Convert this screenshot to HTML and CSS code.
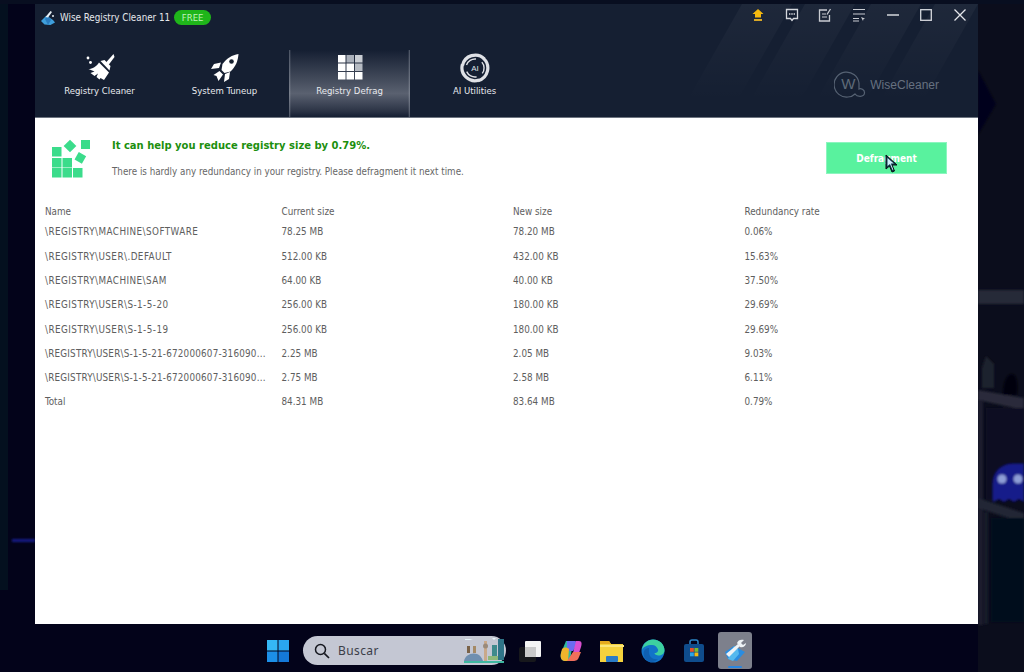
FILE: index.html
```html
<!DOCTYPE html>
<html lang="en">
<head>
<meta charset="utf-8">
<title>Wise Registry Cleaner 11</title>
<link rel="stylesheet" href="styles.css">
</head>
<body>
<div class="desktop">
  <svg class="wallpaper" width="1024" height="672" viewBox="0 0 1024 672" aria-hidden="true">
    <defs>
      <filter id="soft"><feGaussianBlur stdDeviation="1"/></filter>
    </defs>
    <rect width="1024" height="672" fill="#03031a"/>
    <rect x="0" y="0" width="8" height="590" fill="#04101f"/>
    <rect x="978" y="0" width="46" height="672" fill="#0b0d1c"/>
    <g filter="url(#soft)">
      <polygon points="978,70 996,104 978,135" fill="#04061a"/>
      <rect x="978" y="290" width="46" height="14" fill="#262a38"/>
      <polygon points="978,390 1024,398 1024,410 978,400" fill="#292c3a"/>
      <rect x="986" y="408" width="38" height="92" fill="#090b22"/>
      <rect x="978" y="400" width="5" height="225" fill="#1a1e2e"/>
      <polygon points="978,498 1024,513 1024,523 978,508" fill="#242734"/>
      <rect x="984" y="512" width="4" height="112" fill="#191c2c"/>
      <rect x="991" y="518" width="33" height="104" fill="#05071a"/>
      <path d="M993 502v-18c0-12 8-20 20-20h11v38l-5-3-5 3-5-3-5 3-5-3z" fill="#191b8a"/>
      <circle cx="1002" cy="479" r="4.500" fill="#8e9ed6"/>
      <circle cx="1018" cy="479" r="4.500" fill="#8e9ed6"/>
      <path d="M1003 395c0-14 4-21 9-21s6 10 5 21z" fill="#03040c"/>
      <path d="M982 388v-20l4-12 8 8v24z" fill="#1e222e"/>
      <rect x="12" y="539" width="23" height="3" fill="#131a86"/>
    </g>
    <rect x="0" y="0" width="1024" height="4" fill="#080e20"/>
  </svg>

  <main class="window">
    <header class="head">
      <svg class="stripes" width="943" height="113" viewBox="0 0 943 113" aria-hidden="true">
        <defs>
          <linearGradient id="fade" x1="0" y1="0" x2="0" y2="1">
            <stop offset="0" stop-color="#fff" stop-opacity=".04"/>
            <stop offset="1" stop-color="#fff" stop-opacity="0"/>
          </linearGradient>
        </defs>
        <polygon points="707,0 757,0 702,97 652,97" fill="url(#fade)"/>
        <polygon points="770,0 820,0 765,97 715,97" fill="url(#fade)"/>
        <polygon points="836,0 886,0 831,97 781,97" fill="url(#fade)"/>
        <polygon points="900,0 943,0 888,97 845,97" fill="url(#fade)"/>
      </svg>
      <div class="titlebar">
        <div class="brand">
          <svg class="app-icon" width="16" height="16" viewBox="0 0 16 16" aria-hidden="true">
            <path d="M1 11l5-5 2.500 1L13 10l2 2.500-4.500 2.500-6-.5z" fill="#3f9fdc"/>
            <path d="M5 9l3-3 3 4-3 5z" fill="#2a7cc0"/>
            <path d="M5.500 7l5-6 1.500 1-4 5.500z" fill="#e8f0f6"/>
            <circle cx="13" cy="6" r="1" fill="#e8f0f6"/>
          </svg>
          <span class="app-name">Wise Registry Cleaner 11</span>
          <span class="free">FREE</span>
        </div>
        <div class="tools">
          <svg class="tool" width="14" height="14" viewBox="0 0 14 14" aria-hidden="true"><path d="M7 1l5.500 5H10v3.500H4V6H1.500z" fill="#f5b90f"/><rect x="3" y="11" width="8" height="2" fill="#d9a826"/></svg>
          <svg class="tool" width="14" height="14" viewBox="0 0 14 14" aria-hidden="true"><path d="M1.500 1.500h11v9H8.500L7 12.500 5.500 10.500h-4z" fill="none" stroke="#d5d8dd" stroke-width="1.300"/><path d="M4 6h1.400M6.300 6h1.400M8.600 6H10" stroke="#d5d8dd" stroke-width="1.600"/></svg>
          <svg class="tool" width="14" height="14" viewBox="0 0 14 14" aria-hidden="true"><path d="M9 2H1.500v11h10V7" fill="none" stroke="#c9ccd2" stroke-width="1.300"/><path d="M4 6h4M4 9h5" stroke="#c9ccd2" stroke-width="1.200"/><path d="M9 6.500L12.500 1" stroke="#c9ccd2" stroke-width="1.300"/></svg>
          <svg class="tool" width="14" height="14" viewBox="0 0 14 14" aria-hidden="true"><path d="M1 1.500h12M1 6h12M1 10.500h6M1 13h6" stroke="#c9ccd2" stroke-width="1.200"/><path d="M9 9l4 1.500-1.600.7L11 13z" fill="#c9ccd2"/></svg>
          <svg class="tool" width="14" height="14" viewBox="0 0 14 14" aria-hidden="true"><path d="M1 7h12" stroke="#d5d8dd" stroke-width="1.500"/></svg>
          <svg class="tool" width="14" height="14" viewBox="0 0 14 14" aria-hidden="true"><rect x="1.700" y="1.700" width="10.600" height="10.600" fill="none" stroke="#d5d8dd" stroke-width="1.300"/></svg>
          <svg class="tool" width="14" height="14" viewBox="0 0 14 14" aria-hidden="true"><path d="M1.500 1.500l11 11M12.500 1.500l-11 11" stroke="#e4e6ea" stroke-width="1.300"/></svg>
        </div>
      </div>
      <div class="navrow">
        <nav class="tabs">
          <div class="tab">
            <svg class="tab-icon" width="30" height="30" viewBox="0 0 30 30" aria-hidden="true">
              <circle cx="3" cy="5" r="1.400" fill="#fff"/><circle cx="5.500" cy="9.500" r="1.400" fill="#fff"/>
              <path d="M28.500 1l-7.500 8.500 2.500 2.500L29.500 4z" fill="#fff"/>
              <path d="M15.500 8l4-1 6 6-1 4.500z" fill="#fff"/>
              <path d="M14 9.500l10 10-5 7.500-3.500-2-1 1.500-3-2.500 1.500-3.500-3.500 2.500-4-3 4-1.500-6-2.500c4 0 8-2.500 10.500-6.500z" fill="#fff"/>
            </svg>
            <span>Registry Cleaner</span>
          </div>
          <div class="tab">
            <svg class="tab-icon" width="30" height="30" viewBox="0 0 30 30" aria-hidden="true">
              <path d="M28.500 1C22 2 17 5 12.500 11l-1 6 3 3 6-1.500C25.500 14 28 8 28.500 1z" fill="#fff"/>
              <circle cx="21.500" cy="8.500" r="2.300" fill="#16202f"/>
              <path d="M11 9.500L4 11l-3 5 8-1zM20 19l-1 7-5 3 1-8z" fill="#fff"/>
              <path d="M9.500 18l3.500 3.500-4.500 6.500-2-5-3-1z" fill="#fff"/>
            </svg>
            <span>System Tuneup</span>
          </div>
          <div class="tab tab-active">
            <svg class="tab-icon" width="30" height="30" viewBox="0 0 30 30" aria-hidden="true">
              <rect x="3" y="2" width="7.500" height="7.500" fill="#fff"/><rect x="11.500" y="2" width="7.500" height="7.500" fill="#aab0ba"/><rect x="20" y="2" width="7.500" height="7.500" fill="#c9cdd3"/>
              <rect x="3" y="10.500" width="7.500" height="7.500" fill="#fff"/><rect x="11.500" y="10.500" width="7.500" height="7.500" fill="#fff"/><rect x="20" y="10.500" width="7.500" height="7.500" fill="#b6bbc3"/>
              <rect x="3" y="19" width="7.500" height="7.500" fill="#fff"/><rect x="11.500" y="19" width="7.500" height="7.500" fill="#fff"/><rect x="20" y="19" width="7.500" height="7.500" fill="#fff"/>
            </svg>
            <span>Registry Defrag</span>
          </div>
          <div class="tab">
            <svg class="tab-icon tab-icon-ai" width="30" height="30" viewBox="0 0 30 30" aria-hidden="true">
              <g class="swirl">
                <path d="M2.500 12.500A13 13 0 0 1 24.500 6"/>
                <path d="M2.500 12.500A13 13 0 0 1 24.500 6" transform="rotate(120 15 15)"/>
                <path d="M2.500 12.500A13 13 0 0 1 24.500 6" transform="rotate(240 15 15)"/>
                <path d="M6.500 12A9 9 0 0 1 16 6"/>
                <path d="M6.500 12A9 9 0 0 1 16 6" transform="rotate(120 15 15)"/>
                <path d="M6.500 12A9 9 0 0 1 16 6" transform="rotate(240 15 15)"/>
              </g>
              <text class="ai-mark" x="15" y="18" text-anchor="middle">AI</text>
            </svg>
            <span>AI Utilities</span>
          </div>
        </nav>
        <div class="wise-logo">
          <div class="wise-mark">
            <svg width="34" height="28" viewBox="0 0 34 28" aria-hidden="true">
              <path d="M25 12A12.500 12.500 0 1 0 14 26c2.500 0 5-1 7-3 2 3 9 3.500 9.500-1 .3-3.500-4-5-5.500-4z" fill="none" stroke="#566273" stroke-width="1.200"/>
            </svg>
            <span class="wise-w">W</span>
          </div>
          <span class="wise-name">WiseCleaner</span>
        </div>
      </div>
    </header>

    <section class="content">
      <div class="summary">
        <svg class="summary-icon" width="40" height="44" viewBox="0 0 40 44" aria-hidden="true">
          <g fill="#3bdc8b">
            <rect x="1" y="9" width="9.500" height="9.500"/>
            <rect x="1" y="20" width="9.500" height="9.500"/><rect x="11.500" y="20" width="9.500" height="9.500"/>
            <rect x="1" y="30" width="9.500" height="9.500"/><rect x="11.500" y="30" width="9.500" height="9.500"/><rect x="22" y="30" width="9.500" height="9.500"/>
            <rect x="30" y="2" width="9" height="9"/>
            <rect x="14.500" y="3.500" width="9" height="9" transform="rotate(45 19 8)"/>
            <rect x="25" y="15.500" width="8.500" height="8.500" transform="rotate(30 29 20)"/>
          </g>
        </svg>
        <div class="summary-text">
          <h1>It can help you reduce registry size by 0.79%.</h1>
          <p>There is hardly any redundancy in your registry. Please defragment it next time.</p>
        </div>
        <div class="action">
          <button class="defrag" type="button">Defragment</button>
          <svg class="cursor" width="14" height="20" viewBox="0 0 14 20" aria-hidden="true">
            <path d="M1 1v14l3.500-3 2.500 6 2.500-1-2.500-6h5z" fill="#0a3a4a" stroke="#0a0f14" stroke-width="1"/>
            <path d="M2.500 4v8l2.500-2 2.500 6 .8-.4-2.500-6h3z" fill="#cfeefa"/>
          </svg>
        </div>
      </div>

      <div class="report">
        <div class="row row-head"><span>Name</span><span>Current size</span><span>New size</span><span>Redundancy rate</span></div>
        <div class="row"><span class="path">\REGISTRY\MACHINE\SOFTWARE</span><span>78.25 MB</span><span>78.20 MB</span><span>0.06%</span></div>
        <div class="row"><span class="path">\REGISTRY\USER\.DEFAULT</span><span>512.00 KB</span><span>432.00 KB</span><span>15.63%</span></div>
        <div class="row"><span class="path">\REGISTRY\MACHINE\SAM</span><span>64.00 KB</span><span>40.00 KB</span><span>37.50%</span></div>
        <div class="row"><span class="path">\REGISTRY\USER\S-1-5-20</span><span>256.00 KB</span><span>180.00 KB</span><span>29.69%</span></div>
        <div class="row"><span class="path">\REGISTRY\USER\S-1-5-19</span><span>256.00 KB</span><span>180.00 KB</span><span>29.69%</span></div>
        <div class="row"><span class="path-long">\REGISTRY\USER\S-1-5-21-672000607-316090...</span><span>2.25 MB</span><span>2.05 MB</span><span>9.03%</span></div>
        <div class="row"><span class="path-long">\REGISTRY\USER\S-1-5-21-672000607-316090...</span><span>2.75 MB</span><span>2.58 MB</span><span>6.11%</span></div>
        <div class="row"><span>Total</span><span>84.31 MB</span><span>83.64 MB</span><span>0.79%</span></div>
      </div>
    </section>
  </main>

  <footer class="taskbar">
    <svg class="task-icon" width="24" height="24" viewBox="0 0 24 24" aria-hidden="true">
      <rect x="1" y="1" width="10.500" height="10.500" fill="#35b8f5"/><rect x="12.500" y="1" width="10.500" height="10.500" fill="#2aa6f0"/>
      <rect x="1" y="12.500" width="10.500" height="10.500" fill="#1c8fe8"/><rect x="12.500" y="12.500" width="10.500" height="10.500" fill="#1478d8"/>
    </svg>
    <div class="search">
      <svg width="18" height="18" viewBox="0 0 18 18" aria-hidden="true"><circle cx="7.500" cy="7.500" r="5" fill="none" stroke="#15171f" stroke-width="1.500"/><path d="M11.300 11.300L16 16" stroke="#15171f" stroke-width="1.700"/></svg>
      <span class="search-label">Buscar</span>
      <svg class="search-art" width="44" height="28" viewBox="0 0 44 28" aria-hidden="true">
        <path d="M3 2h5l3 1h-8zM30 1h4l-2 2z" fill="#e8f4fa"/>
        <path d="M2 24c1-6 8-9 13-7 3 1 5 4 6 7z" fill="#6f8fb0"/>
        <rect x="5" y="9" width="3" height="7" fill="#7a6248"/><rect x="11" y="9" width="3" height="7" fill="#a58a66"/>
        <rect x="22" y="4" width="3" height="20" fill="#c9a98a"/><circle cx="23.500" cy="9" r="2.500" fill="#9a8a7a"/>
        <rect x="30" y="8" width="5" height="14" fill="#3f8a8c"/><rect x="36" y="2" width="6" height="21" fill="#2f7488"/>
        <rect x="26" y="19" width="10" height="4" fill="#8fb87a"/>
        <path d="M2 24h40v2H2z" fill="#3fb7a0"/>
      </svg>
    </div>
    <div class="task-apps">
      <span class="app"><svg width="24" height="24" viewBox="0 0 24 24" aria-hidden="true"><rect x="1" y="8" width="17" height="15" rx="2" fill="#17181c"/><rect x="7" y="2" width="16" height="16" rx="1" fill="#f4f4f4"/><rect x="7" y="8" width="11" height="10" fill="#c9c9c9"/></svg></span>
      <span class="app"><svg width="24" height="24" viewBox="0 0 24 24" aria-hidden="true"><path d="M7 2h7l-3 20H6C2 22 1 18 2 14z" fill="#2fb8a0"/><path d="M8 2h7c3 0 3 2 2 5l-3 5H8z" fill="#6a6cf0"/><path d="M3 10c2-2 5-2 7 0l-1 12H6C2 22 1 18 2 14z" fill="#f0b42c"/><path d="M17 2h3c3 0 3 3 2 6l-3 9c-1 3-3 5-6 5h-4l5-8z" fill="#d84fd0"/><path d="M14 13h8l-2 5c-1 3-3 4-6 4H8z" fill="#f0705a"/></svg></span>
      <span class="app"><svg width="24" height="24" viewBox="0 0 24 24" aria-hidden="true"><path d="M0 2h9l2 3h12v18H0z" fill="#f5d23d"/><path d="M0 2h9l2 3H0z" fill="#e5ab1f"/><rect x="0" y="6" width="24" height="2" fill="#fbe67a"/><rect x="6" y="17" width="12" height="6" rx="1" fill="#2a7cc8"/></svg></span>
      <span class="app"><svg width="24" height="24" viewBox="0 0 24 24" aria-hidden="true"><circle cx="12" cy="12" r="11.500" fill="#1273c9"/><path d="M1 11C2 4 7 .5 12 .5c7 0 11.500 5 11.500 11 0 3-3 5-6 5-2 0-4-1-4-2.500 3 0 4-2 3.500-3.500C16 8 14 6 11 6 6 6 2 8 1 11z" fill="#3dd0a0"/><path d="M8 13c0 5 4 8 9 7-2 3-7 4-10 2-4-2-5-7-4-10 1-2 3-3 5-3z" fill="#0f5fb0"/></svg></span>
      <span class="app"><svg width="22" height="24" viewBox="0 0 22 24" aria-hidden="true"><path d="M7 6V3c0-1 1-2 2-2h4c1 0 2 1 2 2v3" fill="none" stroke="#2c86c8" stroke-width="1.500"/><rect x="1" y="5" width="20" height="18" rx="2" fill="#0f4c8c"/><rect x="7" y="9" width="3.800" height="3.800" fill="#e8502a"/><rect x="11.500" y="9" width="3.800" height="3.800" fill="#7cb82f"/><rect x="7" y="13.500" width="3.800" height="3.800" fill="#2ca5e8"/><rect x="11.500" y="13.500" width="3.800" height="3.800" fill="#f5b90f"/></svg></span>
      <span class="app app-active"><svg width="26" height="26" viewBox="0 0 26 26" aria-hidden="true"><path d="M3 14l9-6 11 6-8 9-9-2z" fill="#2a8ce0"/><path d="M12 8l4 3 1 5-6 7-5-2z" fill="#55b8ee"/><path d="M4 16L16 6l2 2L7 19z" fill="#eef2f6"/><path d="M15 5c1-3 4-4 7-3l-3 3 2 2 3-2c0 3-3 5-6 4z" fill="#eef2f6"/></svg><i class="app-bar"></i></span>
    </div>
  </footer>
</div>
</body>
</html>
```

FILE: styles.css
```css
* { box-sizing: border-box; }

html, body {
  margin: 0;
  padding: 0;
}

body {
  width: 1024px;
  height: 672px;
  overflow: hidden;
  background: #03031a;
  font-family: "DejaVu Sans Condensed", "DejaVu Sans", sans-serif;
}

.desktop {
  position: relative;
  width: 1024px;
  height: 672px;
  display: flex;
  flex-direction: column;
  padding-top: 4px;
}

.wallpaper {
  position: absolute;
  left: 0;
  top: 0;
}

.window {
  position: relative;
  width: 943px;
  height: 620px;
  margin-left: 35px;
  display: flex;
  flex-direction: column;
  background: #fff;
}

.head {
  position: relative;
  height: 114px;
  flex: none;
  background: #151f32;
  border-bottom: 1px solid #6d7480;
  color: #fff;
}

.stripes {
  position: absolute;
  left: 0;
  top: 0;
}

.titlebar {
  position: relative;
  display: flex;
  justify-content: space-between;
  align-items: center;
  height: 24px;
  padding: 0 11px 0 5px;
}

.brand {
  display: flex;
  align-items: center;
  margin-top: 3px;
}

.app-icon { margin-right: 4px; }

.app-name {
  font-size: 9.750px;
  color: #e6e8ec;
}

.free {
  margin-left: 4px;
  width: 37px;
  height: 15px;
  border-radius: 8px;
  background: #1fb51a;
  color: #c0f2bb;
  font-size: 9.500px;
  line-height: 15px;
  text-align: center;
}

.tools {
  display: flex;
  gap: 19.700px;
  align-items: center;
  margin-bottom: 2px;
}

.navrow {
  position: relative;
  display: flex;
  justify-content: space-between;
  align-items: flex-end;
  height: 89px;
  padding: 22px 39px 0 4px;
}

.tabs {
  display: flex;
  gap: 4px;
  height: 67px;
}

.tab {
  width: 121px;
  height: 67px;
  display: flex;
  flex-direction: column;
  align-items: center;
  padding-top: 3px;
  font-size: 9.500px;
  color: #e8eaee;
}

.tab-icon { display: block; }

.tab span {
  line-height: 15px;
  white-space: nowrap;
}

.tab-active {
  background:
    linear-gradient(90deg, rgba(180,186,196,.45) 0, rgba(180,186,196,0) 2px, rgba(180,186,196,0) 119px, rgba(180,186,196,.45) 121px),
    linear-gradient(180deg, #151f32 0, #444c5c 45%, #5a6170 65%, #2a3244 92%, #151f32 100%);
}

.swirl path {
  fill: none;
  stroke: #dfe1e6;
}

.swirl path:nth-child(-n+3) { stroke-width: 3.200px; }
.swirl path:nth-child(n+4) { stroke-width: 1.400px; }

.ai-mark {
  font-family: "Liberation Sans", sans-serif;
  font-size: 8px;
  fill: #dfe1e6;
}

.wise-logo {
  display: flex;
  align-items: center;
  gap: 2px;
  margin-bottom: 18px;
}

.wise-mark {
  position: relative;
  width: 34px;
  height: 28px;
}

.wise-w {
  position: absolute;
  left: 7px;
  top: 4px;
  font-family: "Liberation Sans", sans-serif;
  font-size: 15px;
  color: #5e6a78;
}

.wise-name {
  font-family: "Liberation Sans", sans-serif;
  font-size: 12px;
  color: #667180;
}

.content {
  flex: 1;
  display: flex;
  flex-direction: column;
}

.summary {
  display: flex;
  align-items: flex-start;
  height: 85px;
  padding: 20px 31px 0 16px;
}

.summary-icon { flex: none; }

.summary-text {
  flex: 1;
  margin-left: 21px;
}

.summary-text h1 {
  margin: 0;
  font-size: 11.100px;
  line-height: 16px;
  font-weight: 700;
  color: #1c8f0e;
}

.summary-text p {
  margin: 10px 0 0;
  font-size: 9.750px;
  line-height: 16px;
  color: #666;
}

.action {
  position: relative;
  margin-top: 4px;
}

.defrag {
  display: block;
  width: 121px;
  height: 32px;
  border: 1px solid #8cf5bf;
  background: #59f29e;
  color: #fff;
  font-family: "DejaVu Sans Condensed", "DejaVu Sans", sans-serif;
  font-size: 10px;
  font-weight: 700;
  padding: 0;
}

.cursor {
  position: absolute;
  left: 59px;
  top: 12px;
}

.report {
  display: flex;
  flex-direction: column;
  padding-left: 10px;
}

.row {
  display: grid;
  grid-template-columns: 236.500px 231.500px 231.500px 1fr;
  height: 24.300px;
  align-items: center;
  font-size: 9.800px;
  color: #5e5e5e;
}

.row-head { height: 16.700px; }

.row span { white-space: nowrap; }

.row .path { letter-spacing: .45px; }
.row .path-long { letter-spacing: .2px; }

.taskbar {
  position: relative;
  flex: 1;
  display: flex;
  align-items: center;
  padding: 5px 0 0 266px;
}

.task-icon { flex: none; }

.search {
  display: flex;
  align-items: center;
  width: 203px;
  height: 29px;
  margin-left: 13px;
  padding: 0 0 0 10px;
  border-radius: 15px;
  background: #c4c7d3;
}

.search-label {
  flex: 1;
  margin-left: 7px;
  font-family: "Noto Sans", sans-serif;
  font-size: 12px;
  letter-spacing: .4px;
  color: #3b3e48;
}

.task-apps {
  display: flex;
  align-items: center;
  margin-left: 3px;
}

.app {
  position: relative;
  width: 41px;
  height: 37px;
  display: flex;
  align-items: center;
  justify-content: center;
}

.app-active {
  width: 34px;
  margin-left: 4px;
  border-radius: 3px;
  background: #7d808c;
}

.app-bar {
  position: absolute;
  left: 10px;
  bottom: 1px;
  width: 14px;
  height: 2px;
  border-radius: 1px;
  background: #2a86e0;
}
```
